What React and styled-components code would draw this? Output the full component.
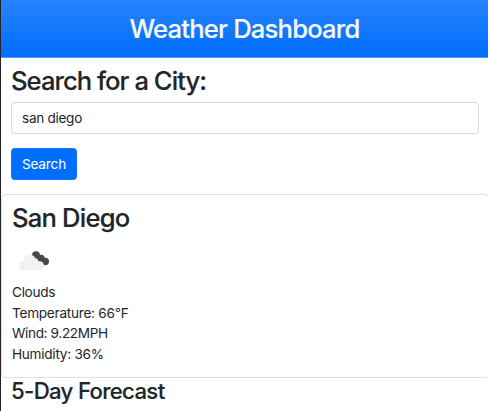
import React from "react";
import styled, { createGlobalStyle } from "styled-components";

const GlobalStyle = createGlobalStyle`
  *, *::before, *::after { box-sizing: border-box; }
  body {
    margin: 0;
    overflow: hidden;
    background: #fff;
    color: #212529;
    font-family: Inter, "Liberation Sans", sans-serif;
    font-size: 13.6px;
    line-height: 20.6px;
  }
`;

const Page = styled.div`
  height: 411px;
  overflow: hidden;
  border-left: 1px solid #242427;
`;

const Header = styled.header`
  height: 58px;
  display: flex;
  justify-content: center;
  padding-top: 13px;
  background: linear-gradient(180deg, #2684fd, #006dfc);
  border-bottom: 1px solid #4b9afe;
`;

const Heading = styled.h2`
  margin: 0;
  font-weight: 500;
  font-size: ${(p) => p.$size || 25.6}px;
  line-height: 32px;
  letter-spacing: ${(p) => p.$tracking || 0}px;
  color: ${(p) => p.$color || "inherit"};
  -webkit-text-stroke: 0.15px currentColor;
  white-space: nowrap;
`;

const SearchForm = styled.form`
  display: flex;
  flex-direction: column;
  align-items: flex-start;
  height: 136px;
  padding: 7px 9px 0 10px;
`;

const CityInput = styled.input`
  width: 100%;
  height: 32px;
  margin: 5px 0 14px;
  padding: 0 10px;
  border: 1px solid #d5dadf;
  border-radius: 4px;
  background: #fff;
  color: #212529;
  font: inherit;
  letter-spacing: -0.3px;
  outline: none;
`;

const SearchButton = styled.button`
  width: 66px;
  height: 32px;
  padding: 0;
  border: 1px solid #0e76fd;
  border-radius: 3.5px;
  background: #006efd;
  color: #fff;
  font: inherit;
  letter-spacing: -0.15px;
`;

const CurrentCard = styled.section`
  height: 184px;
  margin-right: -1px;
  padding: 7px 10px 0;
  border: 1px solid #dfdfdf;
  border-radius: 4px;
`;

const WeatherIcon = styled.svg`
  display: block;
  width: 44px;
  height: 44px;
  margin: 5px 0 -1px;
`;

const Line = styled.p`
  margin: 0;
  letter-spacing: ${(p) => p.$tracking}px;
  white-space: nowrap;
`;

const Forecast = styled.section`
  margin-top: -3px;
  padding: 0 10px;
`;

const readings = [
  { text: "Clouds", tracking: -0.3 },
  { text: "Temperature: 66°F", tracking: -0.25 },
  { text: "Wind: 9.22MPH", tracking: -0.36 },
  { text: "Humidity: 36%", tracking: -0.26 },
];

export default function App() {
  return (
    <>
      <GlobalStyle />
      <Page>
        <Header>
          <Heading as="h1" $color="#f8f9fa" $tracking={-0.8}>Weather Dashboard</Heading>
        </Header>
        <SearchForm onSubmit={(e) => e.preventDefault()}>
          <Heading $tracking={-0.96}>Search for a City:</Heading>
          <CityInput defaultValue="san diego" spellCheck={false} />
          <SearchButton>Search</SearchButton>
        </SearchForm>
        <CurrentCard>
          <Heading $tracking={-0.8}>San Diego</Heading>
          <WeatherIcon viewBox="0 0 44 44" aria-hidden="true">
            <g fill="#484848">
              <circle cx="24" cy="16.2" r="4" />
              <circle cx="29" cy="19.4" r="3.7" />
              <circle cx="33.3" cy="22.5" r="3.7" />
            </g>
            <g fill="#f1f1f1">
              <circle cx="11.6" cy="26.4" r="4.6" />
              <circle cx="17.8" cy="21.300" r="5.8" />
              <circle cx="22.500" cy="22.500" r="3.600" />
              <circle cx="27.600" cy="26.600" r="4.4" />
              <rect x="11.6" y="22.5" width="16" height="8.5" />
            </g>
          </WeatherIcon>
          {readings.map((r) => (
            <Line key={r.text} $tracking={r.tracking}>{r.text}</Line>
          ))}
        </CurrentCard>
        <Forecast>
          <Heading as="h3" $size={22.2} $tracking={-0.67}>5-Day Forecast</Heading>
        </Forecast>
      </Page>
    </>
  );
}
